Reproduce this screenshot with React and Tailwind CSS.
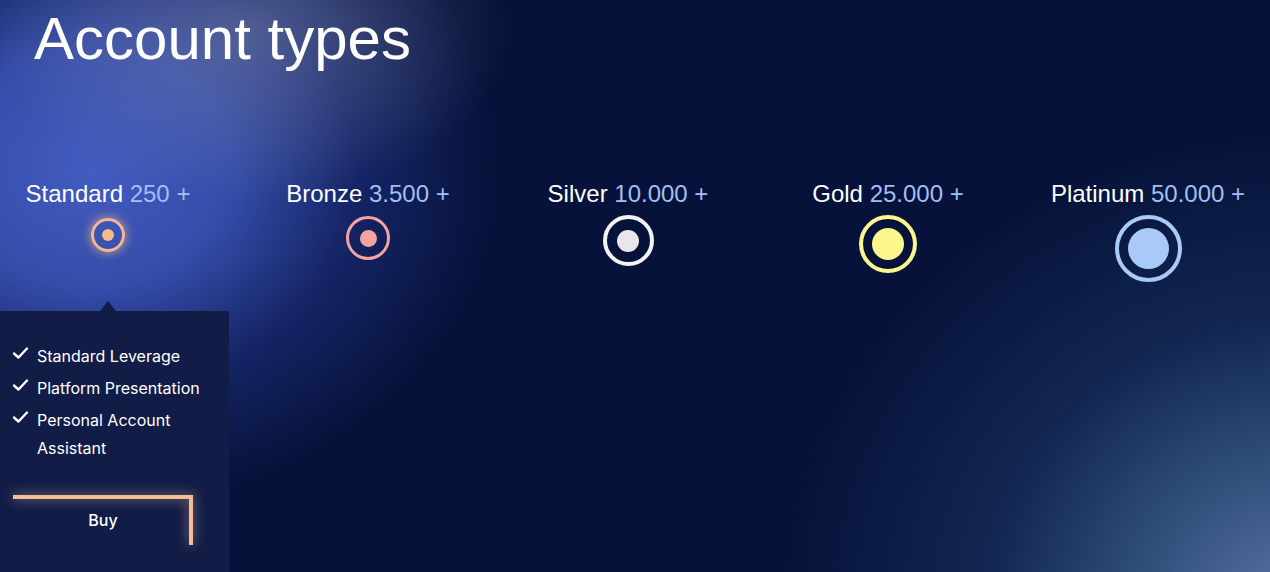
import React from "react";

const tiers = [
  { name: "Standard", amount: "250 +", size: "w-[34px] h-[34px] mt-[3px]", ring: "border-[3px] border-[#f5b88e] shadow-[0_0_10px_2px_rgba(245,184,142,0.55)]", dot: "w-[12px] h-[12px] bg-[#f5b88e]" },
  { name: "Bronze", amount: "3.500 +", size: "w-[44px] h-[44px] mt-[1px]", ring: "border-[3px] border-[#f4a3a0]", dot: "w-[17px] h-[17px] bg-[#f4a3a0]" },
  { name: "Silver", amount: "10.000 +", size: "w-[51px] h-[51px]", ring: "border-[4px] border-[#f4f2f6]", dot: "w-[22px] h-[22px] bg-[#e8e6ec]" },
  { name: "Gold", amount: "25.000 +", size: "w-[58px] h-[58px]", ring: "border-[4px] border-[#fdf68c]", dot: "w-[32px] h-[32px] bg-[#fdf68c]" },
  { name: "Platinum", amount: "50.000 +", size: "w-[67px] h-[67px]", ring: "border-[4px] border-[#a9c9f8]", dot: "w-[41px] h-[41px] bg-[#a9c9f8]" },
];

const features = ["Standard Leverage", "Platform Presentation", "Personal Account Assistant"];

const Check = () => (
  <svg width="17" height="14" viewBox="0 0 17 14" className="shrink-0 mt-[4px]">
    <path d="M2 7.5 L6.5 11.5 L15 2.5" fill="none" stroke="white" strokeWidth="2.4" strokeLinecap="round" strokeLinejoin="round" />
  </svg>
);

const App = () => {
  return (
    <div className="relative w-full h-[572px] overflow-hidden flex flex-col bg-[#061239] bg-[radial-gradient(ellipse_260px_170px_at_250px_30px,rgba(130,140,178,0.5),transparent_100%),radial-gradient(ellipse_410px_340px_at_90px_170px,rgba(66,92,192,1),rgba(58,82,180,0.9)_35%,rgba(35,55,145,0.5)_65%,transparent_100%),radial-gradient(ellipse_520px_480px_at_1300px_610px,rgba(95,115,170,1),rgba(60,95,140,0.8)_30%,rgba(30,60,105,0.5)_60%,transparent_100%)]" style={{ fontFamily: "'Liberation Sans', Arial, sans-serif" }}>
      {/* Heading */}
      <h1 className="pt-[9px] pl-[34px] text-[60px] leading-none text-white">Account types</h1>

      {/* Tiers */}
      <div className="mt-[113px] flex items-start gap-[44px]">
        {tiers.map((t) => (
          <div key={t.name} className="w-[216px] shrink-0 flex flex-col items-center gap-[9px]">
            <div className="text-[24px] leading-none whitespace-nowrap">
              <span className="text-white">{t.name}</span>{" "}
              <span className="text-[#a3bff5]">{t.amount}</span>
            </div>
            <div className={`${t.size} ${t.ring} rounded-full flex items-center justify-center`}>
              <div className={`${t.dot} rounded-full`}></div>
            </div>
          </div>
        ))}
      </div>

      {/* Dropdown for selected tier */}
      <div className="relative mt-[29px] w-[229px] flex-1 bg-[#111c47] pt-[31px] pl-[12px] pr-[8px]" style={{ fontFamily: "Inter, 'Noto Sans', sans-serif" }}>
        <div className="absolute -top-[10px] left-[100px] w-0 h-0 border-l-[8px] border-r-[8px] border-b-[10px] border-l-transparent border-r-transparent border-b-[#111c47]"></div>
        <ul className="flex flex-col gap-1">
          {features.map((f) => (
            <li key={f} className="flex items-start gap-[8px] text-[16px] leading-7 text-white">
              <Check />
              <span>{f}</span>
            </li>
          ))}
        </ul>
        <button className="relative mt-[33px] ml-[1px] w-[180px] h-[50px] text-[16px] font-medium text-white">
          <span className="absolute inset-0 border-t-4 border-r-4 border-[#f6bd98] drop-shadow-[0_0_6px_rgba(246,189,152,0.7)]"></span>
          <span className="relative">Buy</span>
        </button>
      </div>
    </div>
  );
};

export default App;
